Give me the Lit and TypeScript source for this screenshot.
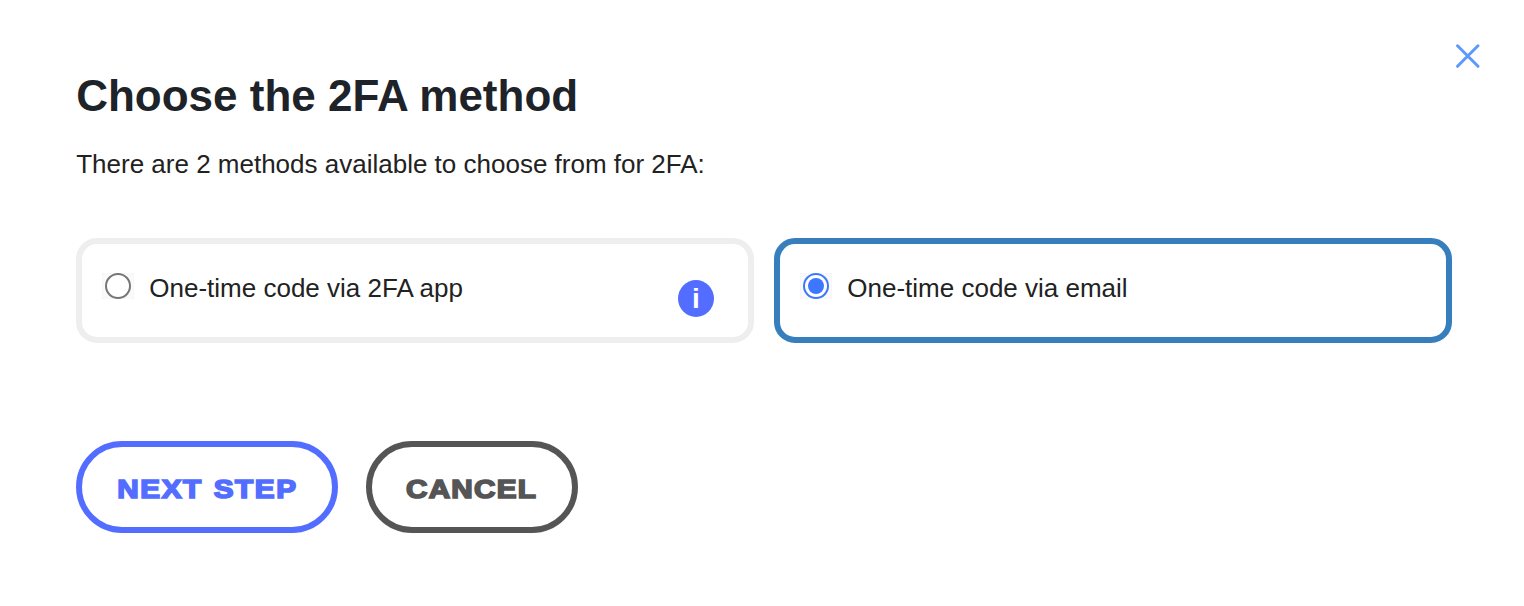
import { LitElement, html, css, svg } from "lit";
import { customElement, state } from "lit/decorators.js";
import { classMap } from "lit/directives/class-map.js";

interface Method {
  id: string;
  label: string;
  info: boolean;
}

const METHODS: Method[] = [
  { id: "app", label: "One-time code via 2FA app", info: true },
  { id: "email", label: "One-time code via email", info: false },
];

@customElement("app-root")
export class AppRoot extends LitElement {
  @state() private selected = "email";

  static styles = css`
    :host {
      display: block;
      box-sizing: border-box;
      height: 606px;
      overflow: hidden;
      padding: 69px 72px 0 76px;
      background: #fff;
      color: #222;
      font-family: "Liberation Sans", Arial, sans-serif;
      font-size: 26px;
      position: relative;
    }
    * {
      box-sizing: border-box;
    }
    .close {
      position: absolute;
      top: 42px;
      right: 42px;
      width: 28px;
      height: 28px;
      padding: 0;
      border: 0;
      background: none;
    }
    svg {
      display: block;
    }
    h1 {
      margin: 0;
      padding-left: 0.2px;
      font-size: 44px;
      line-height: 54px;
      color: #1d2328;
    }
    p {
      margin: 26px 0 0;
      padding-left: 0.2px;
      line-height: 30px;
    }
    .methods {
      display: grid;
      grid-template-columns: 678px 678px;
      gap: 20px;
      margin-top: 59px;
    }
    .method {
      display: flex;
      align-items: flex-start;
      height: 105px;
      padding: 29px 34px 0 20px;
      border: 6px solid #eee;
      border-radius: 21px;
    }
    .method.selected {
      border-color: #377fbc;
    }
    .radio {
      width: 32px;
      height: 26px;
      background: #fafafa;
      box-shadow: inset 0 0 2px #eee;
      margin-right: 15.3px;
    }
    .label {
      flex: 1;
      line-height: 30px;
    }
    .info {
      width: 36px;
      height: 37px;
      margin-top: 7px;
      border-radius: 50%;
      background: #526dff;
      color: #fff;
      font-size: 28px;
      font-weight: 700;
      line-height: 38px;
      text-align: center;
    }
    .actions {
      display: flex;
      gap: 28px;
      margin-top: 98px;
    }
    .btn {
      height: 92px;
      width: 262px;
      padding: 5px 0 0;
      border: 6px solid #526dff;
      border-radius: 46px;
      background: #fff;
      color: #526dff;
      font: 700 26.5px "Liberation Sans", Arial, sans-serif;
      letter-spacing: 1.4px;
      word-spacing: 1px;
      -webkit-text-stroke: 1.7px currentColor;
    }
    .btn span {
      display: inline-block;
      transform: scaleX(1.12);
      white-space: nowrap;
    }
    .btn.cancel {
      width: 212px;
      border-color: #555;
      color: #555;
      letter-spacing: 1.1px;
    }
  `;

  private radio(on: boolean) {
    return html`<svg class="radio" viewBox="0 0 32 26">
      <circle cx="16" cy="13" r="12" fill="#fff" stroke=${on ? "#3d76ff" : "#767676"} stroke-width="2" />
      ${on ? svg`<circle cx="16" cy="13" r="8" fill="#3d76ff" />` : ""}
    </svg>`;
  }

  render() {
    return html`
      <button class="close" aria-label="Close">
        <svg width="28" height="28" viewBox="0 0 28 28">
          <path d="M3.5 3.8 24 24.3M24 3.8 3.5 24.3" stroke="#5c99ff" stroke-width="3" stroke-linecap="round" />
        </svg>
      </button>
      <h1>Choose the 2FA method</h1>
      <p>There are 2 methods available to choose from for 2FA:</p>
      <div class="methods">
        ${METHODS.map(
          (m) => html`<div
            class=${classMap({ method: true, selected: m.id === this.selected })}
            @click=${() => (this.selected = m.id)}
          >
            ${this.radio(m.id === this.selected)}
            <span class="label">${m.label}</span>
            ${m.info ? html`<span class="info">i</span>` : ""}
          </div>`
        )}
      </div>
      <div class="actions">
        <button class="btn"><span>NEXT STEP</span></button>
        <button class="btn cancel"><span>CANCEL</span></button>
      </div>
    `;
  }
}
